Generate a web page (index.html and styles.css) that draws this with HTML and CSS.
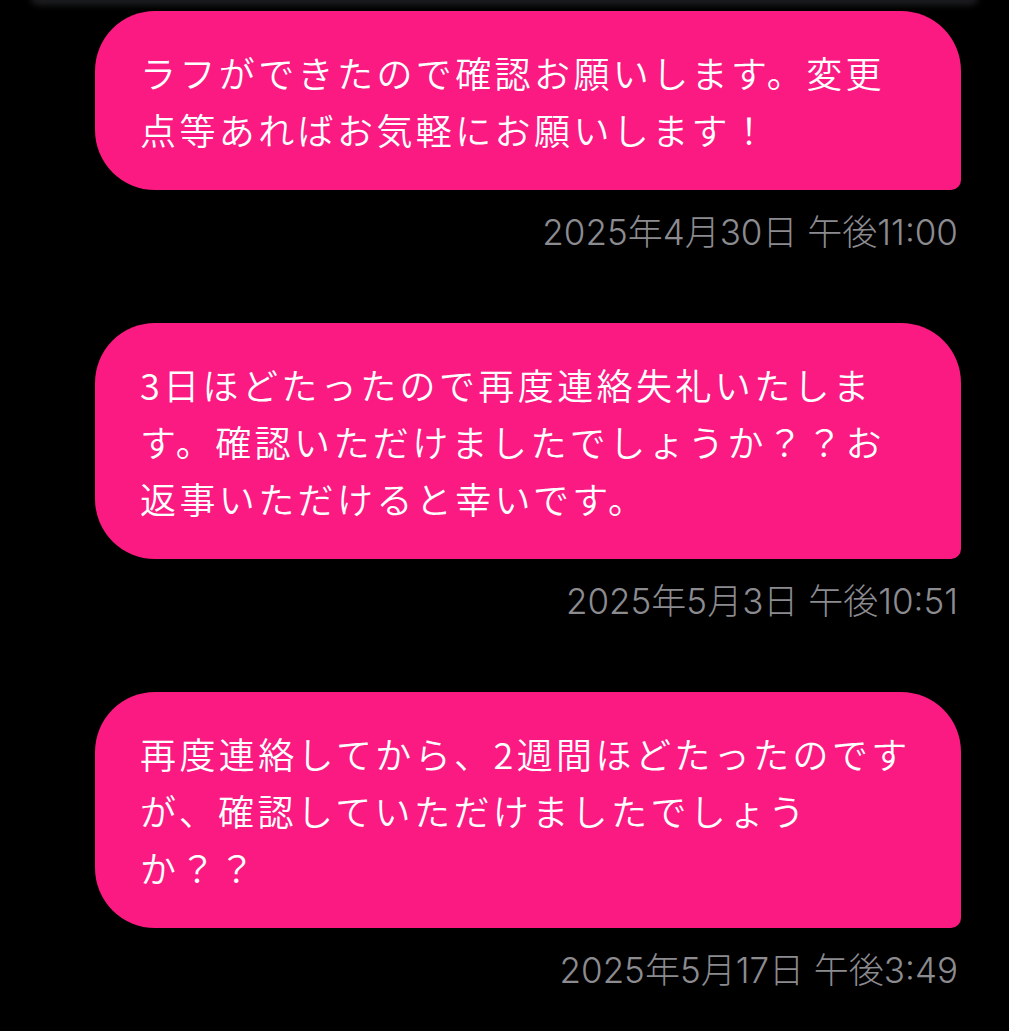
FILE: index.html
```html
<!DOCTYPE html>
<html lang="ja">
<head>
<meta charset="utf-8">
<title>メッセージ</title>
<link rel="stylesheet" href="styles.css">
</head>
<body>
<div class="topbar"><div class="topbar-shade"></div></div>
<main class="thread">
  <div class="message">
    <div class="bubble">ラフができたので確認お願いします。変更点等あればお気軽にお願いします！</div>
    <div class="time">2025年4月30日 午後11:00</div>
  </div>
  <div class="message">
    <div class="bubble">3日ほどたったので再度連絡失礼いたします。確認いただけましたでしょうか？？お返事いただけると幸いです。</div>
    <div class="time">2025年5月3日 午後10:51</div>
  </div>
  <div class="message">
    <div class="bubble">再度連絡してから、2週間ほどたったのですが、確認していただけましたでしょうか？？</div>
    <div class="time">2025年5月17日 午後3:49</div>
  </div>
</main>
</body>
</html>
```

FILE: styles.css
```css
html, body {
  margin: 0;
  padding: 0;
  background: #000;
}

body {
  font-family: "Noto Sans CJK JP", "Noto Sans", sans-serif;
  overflow: hidden;
}

.topbar {
  height: 11px;
  position: relative;
  overflow: hidden;
}

.topbar-shade {
  height: 9px;
  margin: -4px 30px 0;
  background: #1d1e21;
  border-radius: 0 0 14px 14px;
  filter: blur(3px);
}

.thread {
  display: flex;
  flex-direction: column;
  padding: 0 48px 0 95px;
}

.message {
  display: flex;
  flex-direction: column;
}

.bubble {
  background: #fa1a82;
  color: #fff;
  font-size: 36px;
  font-weight: 350;
  line-height: 57px;
  letter-spacing: 3.4px;
  padding: 33px 40px 32px 45px;
  border-radius: 60px 60px 10px 60px;
  line-break: strict;
}

.time {
  color: #8b8b90;
  font-family: "Inter", "Noto Sans CJK JP", sans-serif;
  font-size: 35px;
  font-weight: 300;
  line-height: 40px;
  text-align: right;
  padding-right: 3px;
  margin-top: 22px;
  margin-bottom: 71px;
}
```
